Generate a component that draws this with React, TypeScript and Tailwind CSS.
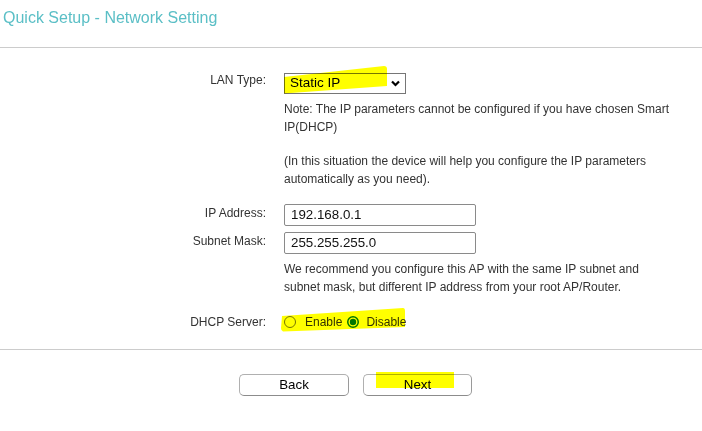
import React from "react";

function Radio({ checked }: { checked: boolean }) {
  return (
    <svg width="12" height="12" viewBox="0 0 12 12" className="shrink-0">
      {checked ? (
        <>
          <circle cx="6" cy="6" r="5.25" fill="#ffffff" stroke="#0075ff" strokeWidth="1.5" />
          <circle cx="6" cy="6" r="3.2" fill="#0075ff" />
        </>
      ) : (
        <circle cx="6" cy="6" r="5.5" fill="#ffffff" stroke="#767676" strokeWidth="1" />
      )}
    </svg>
  );
}

export default function App() {
  return (
    <div className="relative w-[702px] h-[431px] bg-white overflow-hidden text-[#333333] font-['Liberation_Sans',Arial,sans-serif]">
      <div className="h-[47px] pl-[3px] pt-[9px] text-[16px] leading-[18px] text-[#5bbfc6]">
        Quick Setup - Network Setting
      </div>
      <div className="h-px bg-[#cccccc]" />

      {/* LAN Type */}
      <div className="mt-[23px] flex items-start">
        <div className="w-[266px] text-right text-[12px] leading-[18px]">LAN Type:</div>
        <div className="ml-[18px] flex flex-col">
          <div className="mt-[2px] w-[122px] h-[21px] border border-[#767676] flex items-center justify-between pl-[5px] pr-[5px] text-[13.5px] text-black bg-white">
            <span>Static IP</span>
            <svg width="9" height="7" viewBox="0 0 9 7">
              <path d="M1 1.5 L4.5 5 L8 1.5" fill="none" stroke="#000" strokeWidth="2.2" />
            </svg>
          </div>
          <div className="mt-[6px] w-[390px] text-[12px] leading-[18px]">
            Note: The IP parameters cannot be configured if you have chosen Smart IP(DHCP)
          </div>
          <div className="mt-[16px] w-[390px] text-[12px] leading-[18px]">
            (In this situation the device will help you configure the IP parameters automatically as you need).
          </div>
        </div>
      </div>

      {/* IP Address */}
      <div className="mt-[16px] flex items-start">
        <div className="w-[266px] text-right text-[12px] leading-[18px]">IP Address:</div>
        <div className="ml-[18px] w-[192px] h-[22px] border border-[#8a8a8a] rounded-[2px] flex items-center pl-[6px] text-[13.33px] text-[#111111]">
          192.168.0.1
        </div>
      </div>

      {/* Subnet Mask */}
      <div className="mt-[6px] flex items-start">
        <div className="w-[266px] text-right text-[12px] leading-[18px]">Subnet Mask:</div>
        <div className="ml-[18px] w-[192px] h-[22px] border border-[#8a8a8a] rounded-[2px] flex items-center pl-[6px] text-[13.33px] text-[#111111]">
          255.255.255.0
        </div>
      </div>

      <div className="mt-[6px] flex">
        <div className="w-[266px]" />
        <div className="ml-[18px] w-[390px] text-[12px] leading-[18px]">
          We recommend you configure this AP with the same IP subnet and subnet mask, but different IP address from your root AP/Router.
        </div>
      </div>

      {/* DHCP Server */}
      <div className="mt-[17px] flex items-center">
        <div className="w-[266px] text-right text-[12px] leading-[18px]">DHCP Server:</div>
        <div className="ml-[18px] flex items-center text-[12px] leading-[18px]">
          <Radio checked={false} />
          <span className="ml-[9px]">Enable</span>
          <span className="ml-[5px] flex"><Radio checked={true} /></span>
          <span className="ml-[7px]">Disable</span>
        </div>
      </div>

      <div className="mt-[18px] h-px bg-[#cccccc]" />

      <div className="mt-[24px] flex pl-[239px] gap-[14px]">
        <button className="w-[110px] h-[22px] border border-[#b0b0b0] border-b-[#8c8c8c] border-r-[#9a9a9a] rounded-[5px] bg-white text-[13.33px] text-black">
          Back
        </button>
        <button className="w-[109px] h-[22px] border border-[#b0b0b0] border-b-[#8c8c8c] border-r-[#9a9a9a] rounded-[5px] bg-white text-[13.33px] text-black">
          Next
        </button>
      </div>

      {/* highlighter marks */}
      <svg
        className="absolute inset-0 pointer-events-none mix-blend-multiply"
        width="702"
        height="431"
        viewBox="0 0 702 431"
      >
        <path d="M284 77 L384 66 Q387 66 387 69 L387 86 L284 93.5 Z" fill="#ffff00" />
        <path d="M282 316 L403 308 Q405 308 405 311 L405 327 L283 331.5 Q281 331 281 328 Z" fill="#ffff00" />
        <rect x="376" y="372" width="78" height="16" fill="#ffff00" />
      </svg>
    </div>
  );
}
